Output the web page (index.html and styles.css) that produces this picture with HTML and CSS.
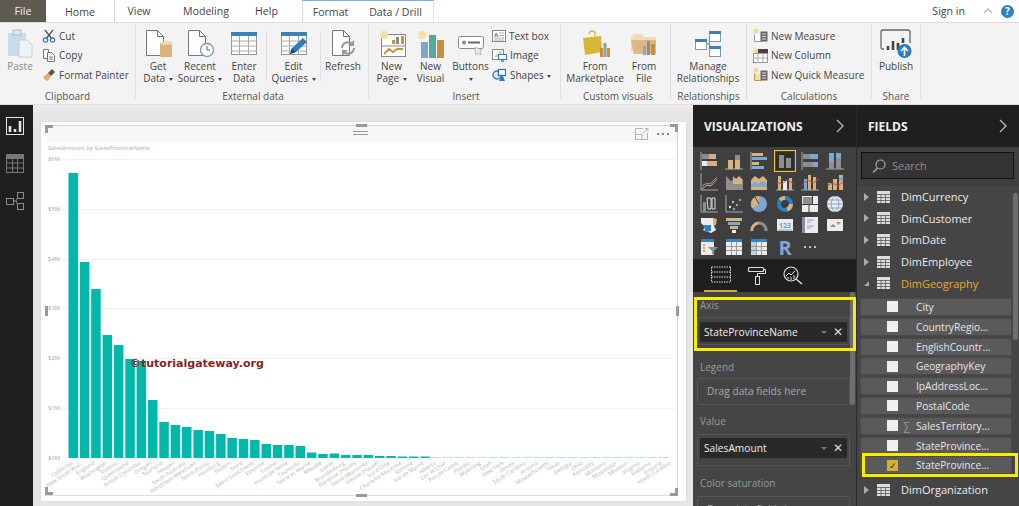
FILE: index.html
```html
<!DOCTYPE html>
<html lang="en">
<head>
<meta charset="utf-8">
<title>Power BI Desktop</title>
<link rel="stylesheet" href="styles.css">
</head>
<body>
<div class="app">
  <header class="tabbar">
    <div class="tab tab-file">File</div>
    <div class="tab tab-home">Home</div>
    <div class="tab tab-view">View</div>
    <div class="tab tab-modeling">Modeling</div>
    <div class="tab tab-help">Help</div>
    <div class="tab tab-format">Format</div>
    <div class="tab tab-drill">Data / Drill</div>
    <div class="signin">Sign in</div>
    <svg class="caret-up" width="12" height="8" viewBox="0 0 12 8"><path d="M2 6l4-4 4 4" fill="none" stroke="#bbb" stroke-width="1.3"/></svg>
    <div class="help-dot">?</div>
  </header>

  <section class="ribbon">
    <div class="group g-clip">
      <div class="group-body">
        <div class="big b-paste muted">
          <svg width="28" height="30" viewBox="0 0 28 30"><rect x="2" y="4" width="18" height="23" fill="#c9dcec"/><rect x="7" y="1" width="8" height="5" fill="#dfe6ec" stroke="#a9bccb"/><path d="M13 11h8l5 5v12H13z" fill="#eef3f3" stroke="#bcd0d8"/></svg>
          <span>Paste</span>
        </div>
        <div class="small-col">
          <div class="small"><svg width="14" height="14" viewBox="0 0 14 14"><path d="M3 1l7 9M11 1L4 10" stroke="#555" stroke-width="1.3" fill="none"/><circle cx="3.5" cy="11" r="2.2" fill="none" stroke="#3a78b8" stroke-width="1.2"/><circle cx="10.5" cy="11" r="2.2" fill="none" stroke="#3a78b8" stroke-width="1.2"/></svg><span>Cut</span></div>
          <div class="small"><svg width="14" height="14" viewBox="0 0 14 14"><path d="M1.500 1.500h5v9h-5z" fill="#fff" stroke="#777"/><path d="M5.500 4.500h4l3 3v6h-7z" fill="#fff" stroke="#777"/><path d="M7 9h4M7 11h4" stroke="#4a86c0"/></svg><span>Copy</span></div>
          <div class="small"><svg width="14" height="14" viewBox="0 0 14 14"><path d="M1 9l5-4 3 3-3 5-3-1z" fill="#d9b070"/><path d="M6 5l4-4 3 3-4 4z" fill="#555"/></svg><span>Format Painter</span></div>
        </div>
      </div>
      <div class="group-label">Clipboard</div>
    </div>

    <div class="group g-ext">
      <div class="group-body">
        <div class="big b-get">
          <svg width="30" height="30" viewBox="0 0 30 30"><path d="M3.500 1.500h11l6 6v19h-17z" fill="#fff" stroke="#777"/><path d="M14.500 1.500v6h6" fill="none" stroke="#777"/><rect x="17" y="14" width="12" height="14" rx="1" fill="#dcb27c"/><ellipse cx="23" cy="14" rx="6" ry="2" fill="#ecd6b4"/></svg>
          <span>Get</span><span>Data <i class="drop"></i></span>
        </div>
        <div class="big b-recent">
          <svg width="30" height="30" viewBox="0 0 30 30"><path d="M3.500 1.500h11l6 6v19h-17z" fill="#fff" stroke="#777"/><path d="M14.500 1.500v6h6" fill="none" stroke="#777"/><circle cx="22" cy="21" r="6.500" fill="#fff" stroke="#6f9ac4" stroke-width="1.300"/><path d="M22 17v4h3" fill="none" stroke="#666"/></svg>
          <span>Recent</span><span>Sources <i class="drop"></i></span>
        </div>
        <div class="big b-enter">
          <svg width="28" height="28" viewBox="0 0 28 28"><rect x="1.500" y="2.500" width="25" height="22" fill="#fff" stroke="#999"/><rect x="1" y="2" width="26" height="4" fill="#3c80c0"/><path d="M1.500 11h25M1.500 16h25M1.500 21h25M9.500 6v18M18.500 6v18" stroke="#aaa" fill="none"/></svg>
          <span>Enter</span><span>Data</span>
        </div>
        <div class="vsep"></div>
        <div class="big b-edit">
          <svg width="28" height="28" viewBox="0 0 28 28"><rect x="1.500" y="2.500" width="25" height="22" fill="#fff" stroke="#999"/><rect x="1" y="2" width="26" height="4" fill="#3c80c0"/><path d="M1.500 11h25M1.500 16h25M1.500 21h25M9.500 6v18M18.500 6v18" stroke="#aaa" fill="none"/><path d="M10 24l2-6L23 8l4 4-11 10z" fill="#2f7cc0"/><path d="M10 24l2-6 4 4z" fill="#1f4e78"/></svg>
          <span>Edit</span><span>Queries <i class="drop"></i></span>
        </div>
        <div class="vsep"></div>
        <div class="big b-refresh">
          <svg width="28" height="30" viewBox="0 0 28 30"><path d="M3.500 1.500h11l6 6v19h-17z" fill="#fff" stroke="#777"/><path d="M14.500 1.500v6h6" fill="none" stroke="#777"/><path d="M13 19a6 6 0 0 1 11-3M25 19a6 6 0 0 1-11 3" fill="none" stroke="#8b9a9a" stroke-width="2"/><path d="M25 11v6h-6zM13 27v-6h6z" fill="#8b9a9a"/></svg>
          <span>Refresh</span>
        </div>
      </div>
      <div class="group-label">External data</div>
    </div>

    <div class="group g-insert">
      <div class="group-body">
        <div class="big b-page">
          <svg width="28" height="28" viewBox="0 0 28 28"><rect x="3.500" y="4.500" width="24" height="22" fill="#fff" stroke="#888"/><path d="M4 16h23" stroke="#888"/><path d="M6 24l5-5 4 3 4-3 6 0" fill="none" stroke="#c9933f" stroke-width="2"/><rect x="14" y="10" width="3" height="4" fill="#c9933f"/><rect x="18" y="7" width="3" height="7" fill="#888"/><rect x="23" y="6" width="3" height="8" fill="#c9933f"/><circle cx="6" cy="5" r="4" fill="#f3dfa8"/></svg>
          <span>New</span><span>Page <i class="drop"></i></span>
        </div>
        <div class="big b-visual">
          <svg width="28" height="28" viewBox="0 0 28 28"><circle cx="5" cy="5" r="4" fill="#f3dfa8"/><rect x="4" y="12" width="7" height="16" fill="#7ea6cf"/><rect x="12" y="5" width="7" height="23" fill="#5aa7a0"/><rect x="20" y="10" width="7" height="18" fill="#c88f3c"/></svg>
          <span>New</span><span>Visual</span>
        </div>
        <div class="big b-buttons">
          <svg width="28" height="28" viewBox="0 0 28 28"><rect x="1.500" y="6.500" width="25" height="12" rx="2" fill="#fff" stroke="#888"/><circle cx="7" cy="12.500" r="2" fill="#5b93c9"/><path d="M11 12.500h12" stroke="#666" stroke-width="2"/><path d="M18 17l1 8 2-2 3 2-1-4 2-1z" fill="#eee" stroke="#999" stroke-width=".6"/></svg>
          <span>Buttons</span><span class="drop-line"><i class="drop"></i></span>
        </div>
        <div class="small-col col-insert">
          <div class="small"><svg width="14" height="14" viewBox="0 0 14 14"><rect x=".5" y="1.500" width="13" height="11" fill="#fff" stroke="#888"/><text x="2" y="7.500" class="ico-a">A</text><path d="M7 4h5M7 6.500h5M2 9h10M2 11h10" stroke="#999" stroke-width=".8"/></svg><span>Text box</span></div>
          <div class="small"><svg width="15" height="14" viewBox="0 0 15 14"><rect x=".5" y="1.500" width="11" height="10" fill="#fff" stroke="#888"/><path d="M2 9l3-3 3 3z" fill="#b9c9d6"/><circle cx="8" cy="4.500" r="1.500" fill="#e2c47c"/><rect x="6.500" y="6.500" width="8" height="5" fill="#fff" stroke="#2f7cc0"/><path d="M9 13h3" stroke="#2f7cc0" stroke-width="1.400"/></svg><span>Image</span></div>
          <div class="small"><svg width="15" height="14" viewBox="0 0 15 14"><circle cx="5" cy="7" r="4" fill="#d4e4f2" stroke="#2f7cc0" stroke-width="1.300"/><rect x="6.500" y="1.500" width="7" height="6" fill="#fff" stroke="#2f6fa8" stroke-width="1.200"/><path d="M10 6l3 7H7z" fill="#2f7cc0"/></svg><span>Shapes <i class="drop"></i></span></div>
        </div>
      </div>
      <div class="group-label">Insert</div>
    </div>

    <div class="group g-custom">
      <div class="group-body">
        <div class="big b-market">
          <svg width="30" height="30" viewBox="0 0 30 30"><path d="M9 5a3 3 0 0 1 6 0v4" fill="none" stroke="#d6b637" stroke-width="1.300"/><path d="M3 9l18-2 1 16-17 3z" fill="#d8b535"/><rect x="20" y="19" width="3" height="9" fill="#c88f3c"/><rect x="23.500" y="14" width="3" height="14" fill="#8fa0ad"/><rect x="27" y="19" width="3" height="9" fill="#c88f3c"/></svg>
          <span>From</span><span>Marketplace</span>
        </div>
        <div class="big b-file">
          <svg width="28" height="28" viewBox="0 0 28 28"><path d="M1 8l3-4h8l2 3h12v15H1z" fill="#f2d9b8"/><path d="M1 10h25v14H4z" fill="#dfb784"/><rect x="13" y="16" width="3" height="9" fill="#7ea6cf"/><rect x="17" y="11" width="3" height="14" fill="#8e8e8e"/><rect x="21" y="14" width="4" height="11" fill="#c88f3c"/></svg>
          <span>From</span><span>File</span>
        </div>
      </div>
      <div class="group-label">Custom visuals</div>
    </div>

    <div class="group g-rel">
      <div class="group-body">
        <div class="big b-manage">
          <svg width="28" height="28" viewBox="0 0 28 28"><path d="M11 14h4l3-7M15 14l3 7" fill="none" stroke="#777"/><rect x="1.500" y="9.500" width="11" height="10" fill="#fff" stroke="#7f97ab"/><rect x="1" y="9" width="12" height="3" fill="#3c80c0"/><rect x="15.500" y="1.500" width="11" height="10" fill="#fff" stroke="#7f97ab"/><rect x="15" y="1" width="12" height="3" fill="#3c80c0"/><rect x="15.500" y="16.500" width="11" height="10" fill="#fff" stroke="#7f97ab"/><rect x="15" y="16" width="12" height="3" fill="#3c80c0"/></svg>
          <span>Manage</span><span>Relationships</span>
        </div>
      </div>
      <div class="group-label">Relationships</div>
    </div>

    <div class="group g-calc">
      <div class="group-body">
        <div class="small-col col-calc">
          <div class="small"><svg width="15" height="15" viewBox="0 0 15 15"><circle cx="3" cy="3" r="2.500" fill="#efd797"/><path d="M1.500 6.500v7h7v-7" fill="#fff" stroke="#999"/><rect x="7.500" y="3.500" width="7" height="10" fill="#666"/><path d="M9 6h4M9 8.500h4M9 11h4" stroke="#ddd"/></svg><span>New Measure</span></div>
          <div class="small"><svg width="15" height="15" viewBox="0 0 15 15"><circle cx="3" cy="3" r="2.500" fill="#efd797"/><rect x=".5" y="5.500" width="14" height="9" fill="#fff" stroke="#999"/><rect x="5" y="1" width="10" height="4" fill="#444"/><path d="M5 5v9M10 5v9M1 10h13" stroke="#aaa"/></svg><span>New Column</span></div>
          <div class="small"><svg width="15" height="15" viewBox="0 0 15 15"><circle cx="3" cy="3" r="2.500" fill="#efd797"/><path d="M1.500 6.500v7h7v-7" fill="#f5dfb8" stroke="#c9933f"/><rect x="7.500" y="3.500" width="7" height="10" fill="#666"/><path d="M9 6h4M9 8.500h4M9 11h4" stroke="#ddd"/></svg><span>New Quick Measure</span></div>
        </div>
      </div>
      <div class="group-label">Calculations</div>
    </div>

    <div class="group g-share">
      <div class="group-body">
        <div class="big b-publish">
          <svg width="32" height="30" viewBox="0 0 32 30"><path d="M4 20H2.500a1.500 1.500 0 0 1-1.500-1.500V3a2 2 0 0 1 2-2h25a2 2 0 0 1 2 2v11" fill="none" stroke="#666" stroke-width="1.300"/><path d="M8 21v-4M13 21v-9M18 21v-7M23 14v-5" stroke="#444" stroke-width="2.600"/><circle cx="24.500" cy="22" r="7" fill="#2a7fc1"/><path d="M24.500 27v-8M21 22l3.500-3.500L28 22" fill="none" stroke="#fff" stroke-width="1.700"/></svg>
          <span>Publish</span>
        </div>
      </div>
      <div class="group-label">Share</div>
    </div>
  </section>

  <main class="workspace">
    <nav class="rail">
      <svg width="18" height="18" viewBox="0 0 18 18"><rect x=".5" y=".5" width="17" height="17" fill="none" stroke="#e6e6e6"/><path d="M4 15V9M9 15v-3M14 15V4" stroke="#e6e6e6" stroke-width="2.600"/></svg>
      <svg width="18" height="19" viewBox="0 0 18 19"><rect x=".5" y=".5" width="17" height="18" fill="none" stroke="#777"/><rect x="1" y="1" width="16" height="4" fill="#777"/><path d="M1 9h16M1 14h16M6.500 5v14M11.500 5v14" stroke="#777"/></svg>
      <svg width="18" height="18" viewBox="0 0 18 18"><path d="M7 9h3l2-4M10 9l2 4" fill="none" stroke="#8a8a8a"/><rect x=".5" y="6.500" width="7" height="6" fill="none" stroke="#8a8a8a"/><rect x="11.500" y=".5" width="6" height="6" fill="none" stroke="#8a8a8a"/><rect x="11.500" y="11.500" width="6" height="6" fill="none" stroke="#8a8a8a"/></svg>
    </nav>

    <div class="canvas">
      <div class="page">
        <div class="visual">
          <div class="visual-head">
            <div class="grip"></div>
            <svg class="focus" width="14" height="12" viewBox="0 0 14 12"><path d="M8 .5H.5v11h12V5M.5 6.500H7v5M8 5l5-4.500M10 .5h3v3" fill="none" stroke="#b5b5b5"/></svg>
            <div class="dots"><i></i><i></i><i></i></div>
          </div>
          <div class="visual-title">SalesAmount by StateProvinceName</div>
          <svg class="chart" width="632" height="343" viewBox="45 153 632 343">
            <g class="grid">
              <path d="M61 158.500h614M61 208.500h614M61 258.500h614M61 307.500h614M61 357.500h614M61 407.500h614"/>
            </g>
            <g class="ylabels">
              <text x="48" y="160">$6M</text><text x="48" y="210">$5M</text><text x="48" y="260">$4M</text><text x="48" y="309">$3M</text><text x="48" y="359">$2M</text><text x="48" y="409">$1M</text><text x="48" y="459">$0M</text>
            </g>
            <g class="bars">
              <rect x="68.500" y="172" width="9.500" height="285"/><rect x="79.900" y="261" width="9.500" height="196"/><rect x="91.200" y="288" width="9.500" height="169"/><rect x="102.600" y="334" width="9.500" height="123"/><rect x="113.900" y="344" width="9.500" height="113"/><rect x="125.300" y="358" width="9.500" height="99"/><rect x="136.600" y="360" width="9.500" height="97"/><rect x="148" y="399" width="9.500" height="58"/><rect x="159.300" y="421" width="9.500" height="36"/><rect x="170.700" y="424" width="9.500" height="33"/><rect x="182" y="426" width="9.500" height="31"/><rect x="193.400" y="429" width="9.500" height="28"/><rect x="204.700" y="430" width="9.500" height="27"/><rect x="216.100" y="433" width="9.500" height="24"/><rect x="227.400" y="437" width="9.500" height="20"/><rect x="238.800" y="438" width="9.500" height="19"/><rect x="250.100" y="439" width="9.500" height="18"/><rect x="261.500" y="443" width="9.500" height="14"/><rect x="272.800" y="444" width="9.500" height="13"/><rect x="284.200" y="444" width="9.500" height="13"/><rect x="295.500" y="445" width="9.500" height="12"/><rect x="306.900" y="451.500" width="9.500" height="5.500"/><rect x="318.200" y="453" width="9.500" height="4"/><rect x="329.600" y="452.500" width="9.500" height="4.500"/><rect x="340.900" y="454" width="9.500" height="3"/><rect x="352.300" y="454" width="9.500" height="3"/><rect x="363.600" y="454" width="9.500" height="3"/><rect x="375" y="455" width="9.500" height="2"/><rect x="386.300" y="455" width="9.500" height="2"/><rect x="397.700" y="455.500" width="9.500" height="1.500"/><rect x="409" y="455.500" width="9.500" height="1.500"/><rect x="420.400" y="455.500" width="9.500" height="1.500"/>
            </g>
            <g class="bars-pale">
              <rect x="431.700" y="456" width="9.500" height="1"/><rect x="443.100" y="456" width="9.500" height="1"/><rect x="454.400" y="456" width="9.500" height="1"/><rect x="465.800" y="456" width="9.500" height="1"/><rect x="477.100" y="456" width="9.500" height="1"/><rect x="488.500" y="456" width="9.500" height="1"/><rect x="499.800" y="456" width="9.500" height="1"/><rect x="511.200" y="456" width="9.500" height="1"/><rect x="522.500" y="456" width="9.500" height="1"/><rect x="533.900" y="456" width="9.500" height="1"/><rect x="545.200" y="456" width="9.500" height="1"/><rect x="556.600" y="456" width="9.500" height="1"/><rect x="567.900" y="456" width="9.500" height="1"/><rect x="579.300" y="456" width="9.500" height="1"/><rect x="590.600" y="456" width="9.500" height="1"/><rect x="602" y="456" width="9.500" height="1"/><rect x="613.300" y="456" width="9.500" height="1"/><rect x="624.700" y="456" width="9.500" height="1"/><rect x="636" y="456" width="9.500" height="1"/><rect x="647.400" y="456" width="9.500" height="1"/><rect x="658.700" y="456" width="9.500" height="1"/>
            </g>
            <g class="xlabels" transform="translate(-2 0)">
              <text transform="translate(75 463) rotate(-33)">California</text>
              <text transform="translate(86 463) rotate(-33)">New South Wal...</text>
              <text transform="translate(97 463) rotate(-33)">England</text>
              <text transform="translate(109 463) rotate(-33)">Washington</text>
              <text transform="translate(120 463) rotate(-33)">Victoria</text>
              <text transform="translate(131 463) rotate(-33)">Queensland</text>
              <text transform="translate(143 463) rotate(-33)">British Columbia</text>
              <text transform="translate(154 463) rotate(-33)">Oregon</text>
              <text transform="translate(165 463) rotate(-33)">Saarland</text>
              <text transform="translate(177 463) rotate(-33)">Hessen</text>
              <text transform="translate(188 463) rotate(-33)">South Australia</text>
              <text transform="translate(199 463) rotate(-33)">Nordrhein-Westfalen</text>
              <text transform="translate(211 463) rotate(-33)">Seine (Paris)</text>
              <text transform="translate(222 463) rotate(-33)">Hamburg</text>
              <text transform="translate(233 463) rotate(-33)">Bayern</text>
              <text transform="translate(245 463) rotate(-33)">Nord</text>
              <text transform="translate(256 463) rotate(-33)">Seine Saint Denis</text>
              <text transform="translate(267 463) rotate(-33)">Essonne</text>
              <text transform="translate(279 463) rotate(-33)">Yveline</text>
              <text transform="translate(290 463) rotate(-33)">Hauts de Seine</text>
              <text transform="translate(302 463) rotate(-33)">Tasmania</text>
              <text transform="translate(313 463) rotate(-33)">Seine et Marne</text>
              <text transform="translate(324 463) rotate(-33)">Moselle</text>
              <text transform="translate(336 463) rotate(-33)">Loiret</text>
              <text transform="translate(347 463) rotate(-33)">Brandenburg</text>
              <text transform="translate(358 463) rotate(-33)">Garonne (Haute)</text>
              <text transform="translate(370 463) rotate(-33)">Seine (Maritime)</text>
              <text transform="translate(381 463) rotate(-33)">Vienne (Haute)</text>
              <text transform="translate(392 463) rotate(-33)">Val d'Oise</text>
              <text transform="translate(404 463) rotate(-33)">Charente-Maritime</text>
              <text transform="translate(415 463) rotate(-33)">Somme</text>
              <text transform="translate(426 463) rotate(-33)">Val de Marne</text>
              <text transform="translate(438 463) rotate(-33)">Alberta</text>
              <text transform="translate(449 463) rotate(-33)">Loir et Cher</text>
              <text transform="translate(460 463) rotate(-33)">Pas de Calais</text>
              <text transform="translate(472 463) rotate(-33)">Florida</text>
              <text transform="translate(483 463) rotate(-33)">Wyoming</text>
              <text transform="translate(494 463) rotate(-33)">Utah</text>
              <text transform="translate(506 463) rotate(-33)">New York</text>
              <text transform="translate(517 463) rotate(-33)">Illinois</text>
              <text transform="translate(528 463) rotate(-33)">South Carolina</text>
              <text transform="translate(540 463) rotate(-33)">Arizona</text>
              <text transform="translate(551 463) rotate(-33)">Massachusetts</text>
              <text transform="translate(562 463) rotate(-33)">Texas</text>
              <text transform="translate(574 463) rotate(-33)">Georgia</text>
              <text transform="translate(585 463) rotate(-33)">Ohio</text>
              <text transform="translate(596 463) rotate(-33)">Kentucky</text>
              <text transform="translate(608 463) rotate(-33)">Montana</text>
              <text transform="translate(619 463) rotate(-33)">Mississippi</text>
              <text transform="translate(630 463) rotate(-33)">Missouri</text>
              <text transform="translate(642 463) rotate(-33)">Virginia</text>
              <text transform="translate(653 463) rotate(-33)">Alabama</text>
              <text transform="translate(664 463) rotate(-33)">Ontario</text>
              <text transform="translate(673 463) rotate(-33)">North Carolina</text>
            </g>
          </svg>
          <i class="handle h-tl"></i><i class="handle h-tr"></i><i class="handle h-bl"></i><i class="handle h-br"></i>
          <i class="handle h-top"></i><i class="handle h-bottom"></i><i class="handle h-left"></i><i class="handle h-right"></i>
          <div class="watermark">©tutorialgateway.org</div>
        </div>
      </div>
    </div>

    <aside class="viz">
      <div class="pane-head"><h2>VISUALIZATIONS</h2><svg width="8" height="14" viewBox="0 0 8 14"><path d="M1 1l6 6-6 6" fill="none" stroke="#bbb" stroke-width="1.300"/></svg></div>
      <div class="viz-grid">
        <svg viewBox="0 0 18 18"><path d="M1 0v18" class="ax"/><rect x="2" y="2" width="7" height="5" class="gy"/><rect x="9" y="2" width="7" height="5" class="tn"/><rect x="2" y="9" width="5" height="5" class="wh"/><rect x="7" y="9" width="10" height="5" class="tn"/></svg>
        <svg viewBox="0 0 18 18"><path d="M0 17h18" class="ax"/><rect x="3" y="8" width="5" height="9" class="tn"/><rect x="10" y="3" width="5" height="5" class="gy"/><rect x="10" y="8" width="5" height="9" class="tn"/></svg>
        <svg viewBox="0 0 18 18"><path d="M1 0v18" class="ax"/><rect x="2" y="1" width="11" height="3" class="tn"/><rect x="2" y="5" width="15" height="3" class="bl"/><rect x="2" y="10" width="7" height="3" class="tn"/><rect x="2" y="14" width="12" height="3" class="bl"/></svg>
        <svg viewBox="0 0 18 18" class="active"><rect x="3" y="3" width="5" height="13" class="gy"/><rect x="10" y="6" width="5" height="10" class="gy"/></svg>
        <svg viewBox="0 0 18 18"><path d="M1 0v18" class="ax"/><rect x="2" y="2" width="7" height="5" class="gy"/><rect x="9" y="2" width="8" height="5" class="bl"/><rect x="2" y="10" width="10" height="5" class="gy"/><rect x="12" y="10" width="5" height="5" class="bl"/></svg>
        <svg viewBox="0 0 18 18"><path d="M0 17h18" class="ax"/><rect x="3" y="1" width="5" height="9" class="bl"/><rect x="3" y="10" width="5" height="7" class="gy"/><rect x="10" y="1" width="5" height="5" class="bl"/><rect x="10" y="6" width="5" height="11" class="gy"/></svg>

        <svg viewBox="0 0 18 18"><path d="M1 0v17h17" class="ax"/><path d="M2 13l5-3 3 1 7-7" class="st-gy"/><path d="M2 16l5-4 4 1 6-7" class="st-tn"/></svg>
        <svg viewBox="0 0 18 18"><path d="M1 1v16h17V6l-4 2-4-3-4 3-5-5z" class="gy"/><path d="M8 3l3 3 3-3 3 3v5h-9z" class="tn"/></svg>
        <svg viewBox="0 0 18 18"><path d="M1 7l4-4 4 3 4-3 4 4v10H1z" class="tn"/><path d="M1 12l4-3 4 2 4-3 4 3v3H1z" class="bl"/></svg>
        <svg viewBox="0 0 18 18"><path d="M0 17h18" class="ax"/><rect x="2" y="3" width="3" height="14" class="tn"/><rect x="7" y="8" width="4" height="9" class="wh"/><rect x="13" y="5" width="3" height="12" class="tn"/><path d="M1 9l5 2 5-4 6 3" class="st-rd"/></svg>
        <svg viewBox="0 0 18 18"><path d="M0 17h18" class="ax"/><rect x="3" y="6" width="3" height="11" class="bl"/><rect x="7" y="2" width="3" height="15" class="tn"/><rect x="12" y="4" width="3" height="13" class="tn"/><path d="M1 12l6-5 5 3 6-4" class="st-rd"/></svg>
        <svg viewBox="0 0 18 18"><rect x="2" y="10" width="4" height="7" class="tn"/><rect x="7" y="6" width="4" height="11" class="tn"/><rect x="13" y="2" width="4" height="15" class="tn"/><path d="M2 12l5-2 5 3 5-4" class="st-rd"/><rect x="13" y="4" width="4" height="4" class="bl"/></svg>

        <svg viewBox="0 0 18 18"><path d="M1 0v17h17" class="ax"/><rect x="3" y="7" width="3" height="10" class="gy"/><path d="M7 3h4v11H8zM12 3v11h3V3z" class="st-wh"/></svg>
        <svg viewBox="0 0 18 18"><path d="M1 0v17h17" class="ax"/><circle cx="5" cy="12" r="1.200" class="wh"/><circle cx="8" cy="7" r="1.200" class="tn"/><circle cx="12" cy="10" r="1.200" class="bl"/><circle cx="15" cy="5" r="1.200" class="bl"/><circle cx="9" cy="14" r="1.200" class="bl"/></svg>
        <svg viewBox="0 0 18 18"><circle cx="9" cy="9" r="8" class="bl"/><path d="M9 9V1a8 8 0 0 0-7 12z" class="tn"/><path d="M9 9L5 2" class="st-dk"/></svg>
        <svg viewBox="0 0 18 18"><circle cx="9" cy="9" r="6" fill="none" stroke="#2d7fc4" stroke-width="4"/><path d="M4 5a6 6 0 0 1 5-2" fill="none" stroke="#d8b27c" stroke-width="4"/><path d="M15 9a6 6 0 0 1-4 5.500" fill="none" stroke="#d8b27c" stroke-width="4"/></svg>
        <svg viewBox="0 0 18 18"><rect x="1" y="1" width="16" height="16" class="wh"/><rect x="2" y="2" width="9" height="7" class="gy"/><path d="M0 9.500h18M11.500 1v8M8 10v8" class="st-dk"/></svg>
        <svg viewBox="0 0 18 18"><circle cx="9" cy="9" r="8" class="wh"/><path d="M1 9h16M2.500 5h13M2.500 13h13M9 1c-5 4-5 12 0 16M9 1c5 4 5 12 0 16" class="st-bl"/></svg>

        <svg viewBox="0 0 18 18"><path d="M1 2h12v4h3l-2 4 2 4-5 3-8-3 2-3-4-4z" class="wh"/><path d="M3 9h8v6l-5 1z" fill="#2d7fc4"/><path d="M13 2l4 1-1 6h-3z" class="tn"/></svg>
        <svg viewBox="0 0 18 18"><rect x="1" y="2" width="16" height="3" class="tn"/><rect x="3" y="6" width="12" height="3" class="bl"/><rect x="5" y="10" width="8" height="3" class="tn"/><rect x="7" y="14" width="4" height="3" class="wh"/></svg>
        <svg viewBox="0 0 18 18"><path d="M2 15a7 7 0 0 1 7-8" fill="none" stroke="#d8b27c" stroke-width="3"/><path d="M9 7a7 7 0 0 1 7 8" fill="none" stroke="#8e8e8e" stroke-width="3"/></svg>
        <svg viewBox="0 0 18 18"><rect x="1" y="3" width="16" height="12" class="wh"/><text x="9" y="12" class="ico-num">123</text><path d="M2 14h14" class="st-gy"/></svg>
        <svg viewBox="0 0 18 18"><rect x="1" y="1" width="16" height="16" class="wh"/><rect x="1" y="1" width="3" height="16" class="gy"/><path d="M6 4h7M6 6h4M6 10h7M6 12h4" class="st-bl"/></svg>
        <svg viewBox="0 0 18 18"><rect x="1" y="3" width="16" height="12" class="wh"/><path d="M4 11l3-3 3 3z" class="gy"/><path d="M10 6h5l-2.500 3z" fill="#c9933f"/></svg>

        <svg viewBox="0 0 18 18"><rect x="1" y="1" width="13" height="16" class="wh"/><rect x="1" y="1" width="13" height="3" fill="#3c80c0"/><path d="M3 7h2M3 10h2M3 13h2" stroke="#c9933f" stroke-width="1.500"/><path d="M8 9h10l-4 4v4l-2-1v-3z" class="gy"/></svg>
        <svg viewBox="0 0 18 18"><rect x="1" y="1" width="16" height="16" class="wh"/><rect x="1" y="1" width="16" height="3" fill="#3c80c0"/><path d="M1 8.500h16M1 12.500h16M6.500 4v13M11.500 4v13" class="st-gy"/></svg>
        <svg viewBox="0 0 18 18"><rect x="1" y="1" width="16" height="16" class="wh"/><rect x="1" y="1" width="16" height="3" fill="#3c80c0"/><rect x="1" y="4" width="5" height="13" fill="#bcd3e8"/><path d="M1 8.500h16M1 12.500h16M6.500 4v13M11.500 4v13" class="st-gy"/></svg>
        <svg viewBox="0 0 18 18"><text x="9" y="17" class="ico-r">R</text></svg>
        <svg viewBox="0 0 18 18"><circle cx="4" cy="9" r="1" class="wh"/><circle cx="9" cy="9" r="1" class="wh"/><circle cx="14" cy="9" r="1" class="wh"/></svg>
      </div>
      <div class="viz-tabs">
        <div class="viz-tab on"><svg width="20" height="17" viewBox="0 0 20 17"><path d="M.5 1h19M.5 6h19M.5 11h19M.5 16h19M.5 1v15M19.500 1v15" fill="none" stroke="#ddd" stroke-dasharray="1.500 1"/></svg></div>
        <div class="viz-tab"><svg width="20" height="19" viewBox="0 0 20 19"><rect x="1.500" y="1.500" width="15" height="4" rx="1" fill="none" stroke="#ddd" stroke-width="1.200"/><path d="M16.500 3.500h2v4h-8v3" fill="none" stroke="#ddd"/><rect x="8.500" y="10.500" width="4" height="8" fill="none" stroke="#ddd"/></svg></div>
        <div class="viz-tab"><svg width="20" height="19" viewBox="0 0 20 19"><circle cx="8" cy="8" r="7" fill="none" stroke="#ddd" stroke-width="1.200"/><path d="M3 10l3-3 2 2 4-4M5 13V11M8 14v-3M11 13V9" fill="none" stroke="#ddd"/><path d="M13 13l6 5" stroke="#ddd" stroke-width="1.500"/></svg></div>
      </div>
      <div class="wells">
        <div class="well-label l-axis">Axis</div>
        <div class="well w-axis">
          <div class="chip"><span>StateProvinceName</span><i class="chip-drop"></i><b>✕</b></div>
        </div>
        <div class="well-label l-legend">Legend</div>
        <div class="well empty w-legend">Drag data fields here</div>
        <div class="well-label l-value">Value</div>
        <div class="well w-value">
          <div class="chip"><span>SalesAmount</span><i class="chip-drop"></i><b>✕</b></div>
        </div>
        <div class="well-label l-color">Color saturation</div>
        <div class="well empty">Drag data fields here</div>
        <div class="well-scroll"></div>
      </div>
      <div class="callout callout-axis"></div>
    </aside>

    <aside class="fields">
      <div class="pane-head fields-head"><h2>FIELDS</h2><svg width="8" height="14" viewBox="0 0 8 14"><path d="M1 1l6 6-6 6" fill="none" stroke="#bbb" stroke-width="1.300"/></svg></div>
      <div class="search-wrap">
        <div class="search"><svg width="14" height="14" viewBox="0 0 14 14"><circle cx="8.500" cy="5.500" r="4.500" fill="none" stroke="#aaa" stroke-width="1.200"/><path d="M5.500 9L1 13.500" stroke="#aaa" stroke-width="1.400"/></svg><span>Search</span></div>
      </div>
      <div class="field-list">
        <div class="table-row"><i class="tri"></i><svg class="tbl" viewBox="0 0 13 12"><path d="M0 0h13v12H0z" fill="#ddd"/><path d="M0 3.500h13M0 6.500h13M0 9.500h13M4 3v9M8.500 3v9" stroke="#555" stroke-width=".8"/></svg><span>DimCurrency</span></div>
        <div class="table-row"><i class="tri"></i><svg class="tbl" viewBox="0 0 13 12"><path d="M0 0h13v12H0z" fill="#ddd"/><path d="M0 3.500h13M0 6.500h13M0 9.500h13M4 3v9M8.500 3v9" stroke="#555" stroke-width=".8"/></svg><span>DimCustomer</span></div>
        <div class="table-row"><i class="tri"></i><svg class="tbl" viewBox="0 0 13 12"><path d="M0 0h13v12H0z" fill="#ddd"/><path d="M0 3.500h13M0 6.500h13M0 9.500h13M4 3v9M8.500 3v9" stroke="#555" stroke-width=".8"/></svg><span>DimDate</span></div>
        <div class="table-row"><i class="tri"></i><svg class="tbl" viewBox="0 0 13 12"><path d="M0 0h13v12H0z" fill="#ddd"/><path d="M0 3.500h13M0 6.500h13M0 9.500h13M4 3v9M8.500 3v9" stroke="#555" stroke-width=".8"/></svg><span>DimEmployee</span></div>
        <div class="table-row open"><i class="tri-open"></i><svg class="tbl" viewBox="0 0 13 12"><path d="M0 0h13v12H0z" fill="#ddd"/><path d="M0 3.500h13M0 6.500h13M0 9.500h13M4 3v9M8.500 3v9" stroke="#555" stroke-width=".8"/></svg><span>DimGeography</span></div>
        <div class="field-rows">
          <div class="field-row"><i class="check"></i><i class="sigma"></i><span>City</span></div>
          <div class="field-row"><i class="check"></i><i class="sigma"></i><span>CountryRegio...</span></div>
          <div class="field-row"><i class="check"></i><i class="sigma"></i><span>EnglishCountr...</span></div>
          <div class="field-row"><i class="check"></i><i class="sigma"></i><span>GeographyKey</span></div>
          <div class="field-row"><i class="check"></i><i class="sigma"></i><span>IpAddressLoc...</span></div>
          <div class="field-row"><i class="check"></i><i class="sigma"></i><span>PostalCode</span></div>
          <div class="field-row"><i class="check"></i><i class="sigma">∑</i><span>SalesTerritory...</span></div>
          <div class="field-row"><i class="check"></i><i class="sigma"></i><span>StateProvince...</span></div>
          <div class="field-row"><i class="check checked">✓</i><i class="sigma"></i><span>StateProvince...</span></div>
        </div>
        <div class="table-row last"><i class="tri"></i><svg class="tbl" viewBox="0 0 13 12"><path d="M0 0h13v12H0z" fill="#ddd"/><path d="M0 3.500h13M0 6.500h13M0 9.500h13M4 3v9M8.500 3v9" stroke="#555" stroke-width=".8"/></svg><span>DimOrganization</span></div>
        <div class="list-scroll"></div>
        <div class="callout callout-field"></div>
      </div>
    </aside>
  </main>
</div>
</body>
</html>
```
FILE: styles.css
```css
* { box-sizing: border-box; }
html, body { margin: 0; padding: 0; }
body { width: 1019px; height: 506px; overflow: hidden; font-family: "Open Sans", "Noto Sans", "Liberation Sans", sans-serif; background: #e6e6e6; }
.app { width: 1019px; height: 506px; display: flex; flex-direction: column; overflow: hidden; }

/* tab strip */
.tabbar { height: 23px; flex: none; display: flex; align-items: stretch; background: #fff; border-bottom: 1px solid #dcdcdc; font-size: 10.6px; color: #444; }
.tab { display: flex; align-items: center; justify-content: center; }
.tab-file { width: 46px; background: #5d5a50; color: #f2f2f2; }
.tab-home { width: 69px; border-right: 1px solid #d8d8d8; height: 23px; }
.tab-view { width: 48px; }
.tab-modeling { width: 86px; }
.tab-help { width: 35px; }
.tab-format { width: 56px; margin-left: 18px; border-top: 1px solid #7ea6d8; border-left: 1px solid #c9d7e8; }
.tab-drill { width: 76px; border-top: 1px solid #7ea6d8; border-right: 1px solid #dfe6ee; }
.signin { margin-left: auto; align-self: center; color: #444; }
.caret-up { align-self: center; margin-left: 17px; }
.help-dot { align-self: center; width: 13px; height: 13px; border-radius: 50%; background: #2f7fc4; color: #fff; font-size: 10px; font-weight: 700; line-height: 13px; text-align: center; margin: 0 5px 0 7px; }

/* ribbon */
.ribbon { height: 82px; flex: none; display: flex; background: #f3f3f3; border-bottom: 1px solid #dedede; font-size: 10px; color: #444; }
.group { flex: none; display: flex; flex-direction: column; border-right: 1px solid #dfdfdf; margin: 1px 0 4px; }
.group-body { flex: 1; min-height: 0; display: flex; padding-top: 5px; }
.group-label { height: 8px; line-height: 8px; text-align: center; color: #555; white-space: nowrap; }
.g-clip { width: 136px; }
.g-ext { width: 233px; padding-left: 2px; }
.g-insert { width: 192px; padding-left: 3px; }
.g-custom { width: 110px; padding-left: 5px; }
.g-rel { width: 76px; }
.g-calc { width: 125px; }
.g-share { width: 49px; }
.big { flex: none; display: flex; flex-direction: column; align-items: center; line-height: 12px; white-space: nowrap; }
.big svg { height: 30px; margin-bottom: 1px; flex: none; }
.muted { color: #8a8a8a; }
.b-paste { width: 40px; }
.b-get { width: 40px; }
.b-recent { width: 44px; }
.b-enter { width: 44px; }
.b-edit { width: 53px; }
.b-refresh { width: 44px; }
.b-page { width: 39px; }
.b-visual { width: 39px; }
.b-buttons { width: 41px; }
.b-market { width: 58px; }
.b-file { width: 40px; }
.b-manage { width: 74px; }
.b-publish { width: 48px; }
.vsep { flex: none; width: 1px; height: 50px; margin-top: 2px; background: #dfdfdf; }
.drop { display: inline-block; width: 0; height: 0; border-left: 2.5px solid transparent; border-right: 2.5px solid transparent; border-top: 3px solid #444; vertical-align: middle; margin-left: 1px; }
.small-col { flex: none; display: flex; flex-direction: column; margin-top: -3px; padding-left: 2px; }
.col-insert { padding-left: 1px; }
.col-calc { padding-left: 6px; }
.small { height: 19.6px; display: flex; align-items: center; gap: 3px; white-space: nowrap; }
.small svg { flex: none; }
.ico-a { font-size: 6px; font-weight: 700; fill: #2f7cc0; }

/* workspace */
.workspace { flex: 1; min-height: 0; display: flex; }
.rail { width: 33px; flex: none; background: #1f1f1f; display: flex; flex-direction: column; align-items: center; padding: 12px 3px 0 0; gap: 19px; }
.canvas { flex: none; width: 660px; padding: 17px 7px 0 8px; background: linear-gradient(#ededed, #e6e6e6 8px); }
.page { width: 645px; height: 379px; background: #fff; padding: 3px 0 0 4px; box-shadow: 0 0 2px #d0d0d0; }
.visual { position: relative; width: 633px; height: 371px; border-top: 1px solid #d9d5c8; border-right: 1px solid #d9d5c8; border-bottom: 1px solid #ddd; }
.visual-head { height: 17px; background: #f7f7f7; display: flex; align-items: center; position: relative; }
.grip { position: absolute; left: 308px; top: 5px; width: 15px; height: 4px; border-top: 1px solid #999; border-bottom: 1px solid #999; }
.focus { position: absolute; left: 590px; top: 2px; }
.dots { position: absolute; left: 612px; top: 7px; display: flex; gap: 3px; }
.dots i { width: 2px; height: 2px; background: #888; display: block; }
.visual-title { height: 11px; font-size: 6px; line-height: 11px; color: #a3b3b3; padding-left: 3px; white-space: nowrap; }
.chart { display: block; }
.grid path { stroke: #f0f0f0; fill: none; }
.ylabels text { font-size: 6px; fill: #aaa; font-family: "Open Sans", sans-serif; }
.bars rect { fill: #01b8aa; }
.bars-pale rect { fill: #b3e6e1; }
.xlabels text { font-size: 5.5px; fill: #b8b4ac; text-anchor: end; font-family: "Open Sans", sans-serif; }
.handle { position: absolute; display: block; }
.h-tl { left: 0; top: -1px; width: 8px; height: 8px; border-left: 3px solid #9a9a9a; border-top: 3px solid #9a9a9a; }
.h-tr { right: -1px; top: -2px; width: 8px; height: 8px; border-right: 3px solid #9a9a9a; border-top: 3px solid #9a9a9a; }
.h-bl { left: 0; bottom: 0; width: 8px; height: 8px; border-left: 3px solid #9a9a9a; border-bottom: 3px solid #9a9a9a; }
.h-br { right: -1px; bottom: -1px; width: 8px; height: 8px; border-right: 3px solid #9a9a9a; border-bottom: 3px solid #9a9a9a; }
.h-top { left: 311px; top: -2px; width: 11px; height: 3px; background: #9a9a9a; }
.h-bottom { left: 311px; bottom: -2px; width: 11px; height: 3px; background: #9a9a9a; }
.h-left { left: 0; top: 180px; width: 3px; height: 10px; background: #9a9a9a; }
.h-right { right: -2px; top: 180px; width: 3px; height: 10px; background: #9a9a9a; }
.watermark { position: absolute; left: 85px; top: 231px; font-family: "DejaVu Sans", sans-serif; font-size: 11px; font-weight: 700; color: #8c1f24; white-space: nowrap; }

/* visualizations pane */
.viz { position: relative; width: 163px; flex: none; background: #1f1f1f; display: flex; flex-direction: column; }
.pane-head { height: 42px; flex: none; display: flex; align-items: center; justify-content: space-between; padding: 0 12px 0 11px; }
.pane-head h2 { margin: 0; font-size: 12px; font-weight: 700; color: #f2f2f2; }
.viz-grid { height: 112px; flex: none; background: #3f3f3f; display: grid; grid-template-columns: repeat(6, 18px); grid-auto-rows: 18px; gap: 3.4px 7.2px; padding: 5px 0 0 7px; align-content: start; }
.viz-grid svg { width: 18px; height: 18px; display: block; overflow: visible; }
.viz-grid .active { outline: 1px solid #f2c811; outline-offset: 1px; background: #2e2e2e; }
.ax { stroke: #aaa; fill: none; }
.gy { fill: #8e8e8e; }
.tn { fill: #d8b27c; }
.bl { fill: #7da7d4; }
.wh { fill: #ececec; }
.st-gy { stroke: #9a9a9a; fill: none; }
.st-tn { stroke: #d8b27c; fill: none; }
.st-rd { stroke: #c0504d; fill: none; }
.st-wh { stroke: #ddd; fill: none; }
.st-dk { stroke: #3f3f3f; fill: none; }
.st-bl { stroke: #7da7d4; fill: none; }
.ico-num { font-size: 7px; font-weight: 700; fill: #6f9ac4; text-anchor: middle; }
.ico-r { font-size: 20px; font-weight: 700; fill: #7da7d4; text-anchor: middle; }
.viz-tabs { height: 33px; flex: none; display: flex; gap: 3px; padding-left: 11px; align-items: stretch; }
.viz-tab { width: 33px; display: flex; align-items: center; justify-content: center; }
.viz-tab.on { border-bottom: 2px solid #d2a83c; }
.wells { flex: 1; min-height: 0; position: relative; background: #454545; padding: 6px 6px 0 4px; overflow: hidden; }
.well-label { font-size: 10px; line-height: 14px; color: #9a9a9a; margin: 10px 0 6px 3px; }
.l-axis { margin: 0 0 5px 3px; }
.l-legend { margin: 15px 0 4px 3px; }
.l-value { margin: 9px 0 6px 3px; }
.well { border: 1px dotted #666; border-radius: 2px; padding: 4px 2px; height: 28px; width: 153px; }
.w-legend { height: 27px; }
.w-value { height: 32px; padding-top: 3px; }
.well.empty { color: #a8a8a8; font-size: 10.2px; line-height: 24px; padding: 0 0 0 9px; }
.chip { height: 20px; background: #292929; display: flex; align-items: center; color: #eee; font-size: 10.2px; padding: 0 4px 0 4px; border-radius: 1px; }
.chip span { flex: 1; }
.chip-drop { width: 0; height: 0; border-left: 3px solid transparent; border-right: 3px solid transparent; border-top: 3px solid #777; margin-right: 6px; }
.chip b { font-size: 12px; font-weight: 400; color: #ddd; line-height: 12px; }
.well-scroll { position: absolute; right: 1px; top: 0; width: 5px; height: 113px; background: #6e6e6e; border-radius: 2px; }
.callout { position: absolute; border: 3px solid #f5ee00; pointer-events: none; }
.callout-axis { left: 1px; top: 192px; width: 162px; height: 54px; }
.callout-field { left: 5px; top: 267px; width: 156px; height: 24px; }

/* fields pane */
.fields { width: 163px; flex: none; background: #1f1f1f; display: flex; flex-direction: column; border-left: 1px solid #2a2a2a; }
.search-wrap { height: 39px; flex: none; background: #3f3f3f; padding: 5px 5px 0 4px; }
.search { height: 27px; background: #333; border: 1px solid #111; display: flex; align-items: center; gap: 6px; padding-left: 10px; color: #8e8e8e; font-size: 11px; }
.field-list { flex: 1; min-height: 0; position: relative; background: #454545; }
.table-row { height: 21.6px; display: flex; align-items: center; color: #ececec; font-size: 11px; padding-left: 7px; white-space: nowrap; }
.table-row.open span { color: #e7a92f; }
.table-row.last { margin-top: 3px; }
.tri { width: 0; height: 0; border-top: 4px solid transparent; border-bottom: 4px solid transparent; border-left: 5px solid #aaa; flex: none; }
.tri-open { width: 0; height: 0; border-bottom: 5px solid #aaa; border-left: 5px solid transparent; flex: none; }
.tbl { width: 13px; height: 12px; margin: 0 11px 0 8px; flex: none; }
.field-rows { display: flex; flex-direction: column; padding-top: 4px; }
.field-row { width: 152px; height: 18px; margin: 0 0 1.8px 3px; background: #5a5a5a; border: 1px dotted #3a3a3a; border-radius: 2px; display: flex; align-items: center; color: #e6e6e6; font-size: 10.2px; padding-left: 26px; white-space: nowrap; }
.check { width: 11px; height: 11px; background: #f0f0f0; flex: none; display: flex; align-items: center; justify-content: center; font-size: 9px; font-style: normal; color: #222; }
.check.checked { background: #d7b02f; }
.sigma { width: 18px; flex: none; font-style: normal; color: #999; font-size: 11px; padding-left: 5px; line-height: 14px; }
.list-scroll { position: absolute; right: 1px; top: 7px; width: 5px; height: 147px; background: #6e6e6e; border-radius: 2px; }
```
